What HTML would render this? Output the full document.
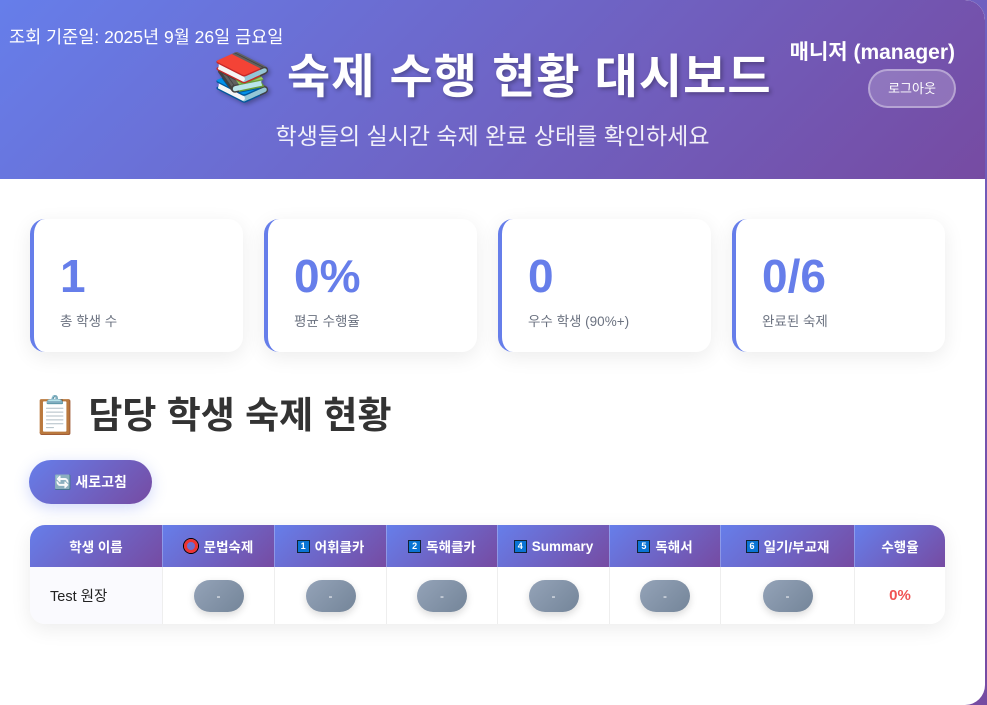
<!DOCTYPE html>
<html><head><meta charset="utf-8"><style>
*{box-sizing:border-box;margin:0;padding:0}
body{width:987px;height:705px;overflow:hidden;background:linear-gradient(135deg,#667eea,#764ba2);font-family:"Liberation Sans","Noto Sans CJK KR",sans-serif;}
.wrap{position:absolute;left:0;top:0;width:985px;height:705px;background:#fff;border-radius:0 20px 20px 0;overflow:hidden}
.hdr{position:absolute;left:0;top:0;width:985px;height:179px;background:linear-gradient(135deg,#667eea,#764ba2);color:#fff;border-radius:0 20px 0 0}
.date{position:absolute;left:9px;top:24px;font-size:17.5px}
.title{position:absolute;left:0;width:985px;top:38px;text-align:center;font-size:47px;font-weight:bold;text-shadow:2px 2px 4px rgba(0,0,0,.3);letter-spacing:1px}
.sub{position:absolute;left:0;width:985px;top:117px;text-align:center;font-size:23px;opacity:.9}
.user{position:absolute;right:30px;top:36px;font-size:21px;font-weight:bold}
.logout{position:absolute;left:868px;top:69px;width:88px;height:39px;border-radius:20px;background:rgba(255,255,255,.2);border:2px solid rgba(255,255,255,.35);font-size:13px;text-align:center;line-height:35px}
.card{position:absolute;top:219px;width:213px;height:133px;background:#fff;border-radius:15px;border-left:4px solid #667eea;box-shadow:0 5px 20px rgba(0,0,0,.08)}
.card .n{position:absolute;left:26px;top:30px;font-size:46px;font-weight:bold;color:#667eea}
.card .l{position:absolute;left:26px;top:91px;font-size:13.5px;color:#6b7280}
.sec{position:absolute;left:32px;top:385px;font-size:37px;font-weight:bold;color:#333}
.btn{position:absolute;left:29px;top:460px;width:123px;height:44px;border-radius:22px;background:linear-gradient(135deg,#667eea,#764ba2);color:#fff;font-size:14px;font-weight:bold;line-height:44px;text-align:center;box-shadow:0 4px 15px rgba(102,126,234,.3)}
.tbl{position:absolute;left:30px;top:525px;width:915px;height:99px;border-radius:15px;overflow:hidden;box-shadow:0 5px 20px rgba(0,0,0,.08)}
.c{position:absolute;display:flex;align-items:center;justify-content:center}
.h{top:0;height:42px;background:linear-gradient(135deg,#667eea,#764ba2);color:#fff;font-size:13.5px;font-weight:bold;border-right:1px solid rgba(255,255,255,.25)}
.r{top:42px;height:57px;border-right:1px solid #eee;background:#fff}
.pill{width:50px;height:32px;border-radius:16px;background:linear-gradient(135deg,#94a3b8,#748599);color:#fff;font-size:12px;text-align:center;line-height:32px;box-shadow:0 3px 8px rgba(0,0,0,.15)}
.k{display:inline-block;width:13px;height:13px;background:#0a74d4;border:1px solid #123;color:#fff;font-size:9px;line-height:11px;text-align:center;margin-right:5px}
.o{display:inline-block;width:14px;height:14px;border-radius:50%;border:3px solid #e33;box-shadow:0 0 0 1px #000;margin-right:6px}
</style></head><body>
<div class="wrap">
<div class="hdr">
<div class="date">조회 기준일: 2025년 9월 26일 금요일</div>
<div class="title">📚 숙제 수행 현황 대시보드</div>
<div class="sub">학생들의 실시간 숙제 완료 상태를 확인하세요</div>
<div class="user">매니저 (manager)</div>
<div class="logout">로그아웃</div>
</div>
<div class="card" style="left:30px"><div class="n">1</div><div class="l">총 학생 수</div></div>
<div class="card" style="left:264px"><div class="n">0%</div><div class="l">평균 수행율</div></div>
<div class="card" style="left:498px"><div class="n">0</div><div class="l">우수 학생 (90%+)</div></div>
<div class="card" style="left:732px"><div class="n">0/6</div><div class="l">완료된 숙제</div></div>
<div class="sec">📋 담당 학생 숙제 현황</div>
<div class="btn">🔄 새로고침</div>
<div class="tbl">
<div class="c h" style="left:0;width:133px">학생 이름</div>
<div class="c h" style="left:133px;width:112px"><span class="o"></span>문법숙제</div>
<div class="c h" style="left:245px;width:112px"><span class="k">1</span>어휘클카</div>
<div class="c h" style="left:357px;width:111px"><span class="k">2</span>독해클카</div>
<div class="c h" style="left:468px;width:112px"><span class="k">4</span>Summary</div>
<div class="c h" style="left:580px;width:111px"><span class="k">5</span>독해서</div>
<div class="c h" style="left:691px;width:134px"><span class="k">6</span>일기/부교재</div>
<div class="c h" style="left:825px;width:90px;border-right:0">수행율</div>
<div class="c r" style="left:0;width:133px;justify-content:flex-start;padding-left:20px;font-size:14.5px;color:#222;background:#fafafe">Test 원장</div>
<div class="c r" style="left:133px;width:112px"><div class="pill">-</div></div>
<div class="c r" style="left:245px;width:112px"><div class="pill">-</div></div>
<div class="c r" style="left:357px;width:111px"><div class="pill">-</div></div>
<div class="c r" style="left:468px;width:112px"><div class="pill">-</div></div>
<div class="c r" style="left:580px;width:111px"><div class="pill">-</div></div>
<div class="c r" style="left:691px;width:134px"><div class="pill">-</div></div>
<div class="c r" style="left:825px;width:90px;border-right:0;color:#f05252;font-weight:bold;font-size:15px">0%</div>
</div>
</div>
</body></html>
